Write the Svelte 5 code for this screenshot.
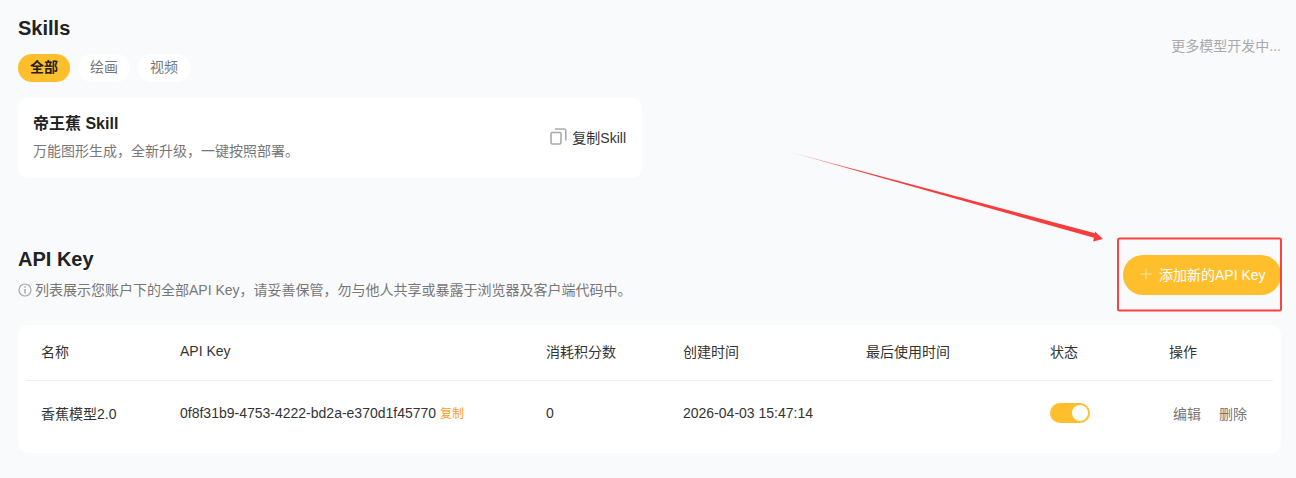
<script>
  const tabs = [
    { label: '全部', active: true },
    { label: '绘画', active: false },
    { label: '视频', active: false }
  ];
</script>

<div class="page">
  <section class="skills">
    <div class="skills-main">
      <h2 class="title">Skills</h2>
      <div class="tabs">
        {#each tabs as t}
          <button class="tab" class:active={t.active}>{t.label}</button>
        {/each}
      </div>
      <div class="skill-card">
        <div>
          <div class="skill-name">帝王蕉 Skill</div>
          <div class="skill-desc">万能图形生成，全新升级，一键按照部署。</div>
        </div>
        <div class="copy-skill">
          <svg width="17" height="17" viewBox="0 0 17 17" fill="none" stroke="#aaa" stroke-width="1.6">
            <rect x="1" y="4.5" width="10" height="11.5" rx="1.5" />
            <path d="M5 1h9.2a1.6 1.6 0 0 1 1.6 1.6V12.5" />
          </svg>
          <span>复制Skill</span>
        </div>
      </div>
    </div>
    <div class="more">更多模型开发中...</div>
  </section>

  <section class="api-head">
    <div>
      <h2 class="title">API Key</h2>
      <div class="hint">
        <svg width="14" height="14" viewBox="0 0 14 14" fill="none" stroke="#a8a8a8" stroke-width="1.2">
          <circle cx="7" cy="7" r="6" />
          <path d="M7 6v4.6M7 3.2v1.6" stroke-width="1.5" />
        </svg>
        <span>列表展示您账户下的全部API Key，请妥善保管，勿与他人共享或暴露于浏览器及客户端代码中。</span>
      </div>
    </div>
    <button class="add">
      <svg width="12" height="12" viewBox="0 0 12 12" stroke="#ffe39a" stroke-width="1.1">
        <path d="M6 .5v11M.5 6h11" />
      </svg>
      <span>添加新的API Key</span>
    </button>
  </section>

  <section class="table">
    <div class="row head">
      <div>名称</div>
      <div>API Key</div>
      <div>消耗积分数</div>
      <div>创建时间</div>
      <div>最后使用时间</div>
      <div>状态</div>
      <div>操作</div>
    </div>
    <div class="row body">
      <div>香蕉模型2.0</div>
      <div class="key">0f8f31b9-4753-4222-bd2a-e370d1f45770 <span class="copy">复制</span></div>
      <div>0</div>
      <div>2026-04-03 15:47:14</div>
      <div></div>
      <div><span class="switch"><span class="knob"></span></span></div>
      <div class="ops"><span>编辑</span><span>删除</span></div>
    </div>
  </section>

  <svg class="annot" width="1296" height="478" viewBox="0 0 1296 478" fill="none">
    <defs>
      <linearGradient id="fade" gradientUnits="userSpaceOnUse" x1="788" y1="152" x2="860" y2="171">
        <stop offset="0" stop-color="#f83c3c" stop-opacity="0.35" />
        <stop offset="1" stop-color="#f83c3c" />
      </linearGradient>
    </defs>
    <polygon points="788,151.5 1095,233.2 1095,231.5 1103,239 1093,241.5 1094,237.8" fill="url(#fade)" />
    <rect x="1118" y="238.5" width="163" height="72" rx="1.5" stroke="#f64444" stroke-width="2" />
  </svg>
</div>

<style>
  :global(body) {
    margin: 0;
    background: #f9fafc;
  }
  .page {
    position: relative;
    box-sizing: border-box;
    width: 1296px;
    height: 478px;
    overflow: hidden;
    padding: 17px 15px 0 18px;
    font-family: "Liberation Sans", "Noto Sans CJK SC", sans-serif;
    font-size: 14px;
    color: #222;
  }
  .title {
    margin: 0;
    font-size: 20px;
    line-height: 23px;
    font-weight: 700;
    color: #222;
  }
  .skills {
    display: flex;
    justify-content: space-between;
  }
  .skills-main {
    width: 624px;
  }
  .tabs {
    display: flex;
    gap: 8px;
    margin-top: 14px;
  }
  .tab {
    width: 52px;
    height: 28px;
    padding: 0 0 4px;
    border: 0;
    border-radius: 14px;
    background: #fff;
    color: #777;
    font: inherit;
    font-size: 14px;
  }
  .tab.active {
    background: #ffbf2c;
    color: #222;
    font-weight: 700;
  }
  .skill-card {
    display: flex;
    justify-content: space-between;
    align-items: center;
    box-sizing: border-box;
    height: 80px;
    margin-top: 16px;
    padding: 0 16px 3px 15px;
    background: #fff;
    border-radius: 10px;
  }
  .skill-name {
    font-size: 16px;
    line-height: 20px;
    font-weight: 700;
    color: #222;
  }
  .skill-desc {
    margin-top: 8px;
    font-size: 14px;
    line-height: 18px;
    color: #777;
  }
  .copy-skill {
    display: flex;
    align-items: center;
    gap: 5px;
    font-size: 14px;
    color: #333;
  }
  .more {
    margin-top: 20px;
    font-size: 14px;
    line-height: 18px;
    color: #aaa;
  }
  .api-head {
    display: flex;
    justify-content: space-between;
    align-items: flex-start;
    margin-top: 70px;
  }
  .hint {
    display: flex;
    align-items: center;
    gap: 3px;
    margin-top: 10px;
    font-size: 14px;
    line-height: 18px;
    color: #777;
  }
  .add {
    display: flex;
    align-items: center;
    gap: 7px;
    width: 158px;
    height: 40px;
    margin-top: 7px;
    padding: 0 0 2px 17px;
    border: 0;
    border-radius: 20px;
    background: #ffbf2c;
    color: #fff;
    font: inherit;
    font-size: 14px;
  }
  .table {
    margin-top: 26px;
    height: 128px;
    padding: 0 8px;
    background: #fff;
    border-radius: 10px;
  }
  .row {
    display: grid;
    grid-template-columns: 139px 366px 137px 183px 184px 119px 1fr;
    align-items: center;
    padding-left: 15px;
    font-size: 14px;
    color: #333;
  }
  .head {
    box-sizing: border-box;
    height: 56px;
    padding-bottom: 4px;
    border-bottom: 1px solid #eeeef4;
  }
  .body {
    height: 63px;
    padding-bottom: 5px;
  }
  .key {
    white-space: nowrap;
  }
  .copy {
    font-size: 12px;
    color: #ff9a1f;
  }
  .switch {
    display: block;
    position: relative;
    width: 40px;
    height: 20px;
    border-radius: 10px;
    background: #ffbf2c;
  }
  .knob {
    position: absolute;
    top: 2px;
    right: 2px;
    width: 16px;
    height: 16px;
    border-radius: 50%;
    background: #fff;
  }
  .ops {
    display: flex;
    gap: 18px;
    padding-left: 4px;
    color: #777;
  }
  .annot {
    position: absolute;
    left: 0;
    top: 0;
    pointer-events: none;
  }
</style>
